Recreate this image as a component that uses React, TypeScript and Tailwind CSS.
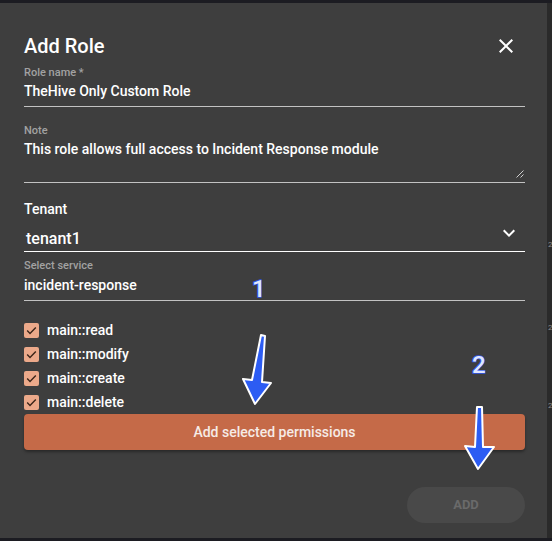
import React from 'react'

const permissions = ['main::read', 'main::modify', 'main::create', 'main::delete']

function CheckBox() {
  return (
    <span className="flex h-[15px] w-[15px] items-center justify-center rounded-[2px] bg-[#eca98a]">
      <svg width="11" height="9" viewBox="0 0 11 9" fill="none">
        <path d="M1.2 4.6 4 7.4 9.8 1.4" stroke="#3b2418" strokeWidth="1.4" />
      </svg>
    </span>
  )
}

function Annotations() {
  return (
    <svg className="pointer-events-none absolute inset-0" width="552" height="541" viewBox="0 0 552 541">
      <g stroke="#ffffff" strokeWidth="2" strokeLinejoin="round" fill="#2c5cf3">
        <polygon points="261,335 265,336 262,382 271,383 255,404 243,379 252,380" />
        <polygon points="477,407 482,407 483,447 494,447 478,469 465,446 475,447" />
      </g>
      <g
        fontFamily="Roboto, sans-serif"
        fontWeight="500"
        fontSize="24"
        fill="#dfe6ff"
        stroke="#3056e8"
        strokeWidth="1.6"
        style={{ paintOrder: 'stroke' }}
      >
        <text x="252" y="297">1</text>
        <text x="472" y="373">2</text>
      </g>
    </svg>
  )
}

export default function App() {
  return (
    <div className="relative h-[541px] w-[552px] overflow-hidden bg-[#2a2a2a] font-['Roboto',sans-serif] text-white">
      <div className="h-[3px] bg-[#1c1c22]" />
      <div className="flex">
        <div className="flex h-[535px] w-[547px] flex-col bg-[#3e3e3e] pl-6 pr-[22px]">
          <div className="mt-[31px] flex h-6 items-center justify-between">
            <h2 className="text-[20px] leading-6 font-medium">Add Role</h2>
            <svg className="mr-[7px]" width="24" height="24" viewBox="0 0 24 24" fill="#ffffff">
              <path d="M19 6.41 17.59 5 12 10.59 6.41 5 5 6.41 10.59 12 5 17.59 6.41 19 12 13.41 17.59 19 19 17.59 13.41 12z" />
            </svg>
          </div>

          <div className="mt-2">
            <div className="text-[11px] leading-[13px] font-medium text-[#a2a2a2]">Role name *</div>
            <div className="mt-[2px] border-b border-[#c2c2c2] pb-[5px] text-[14px] leading-5 font-medium">
              TheHive Only Custom Role
            </div>
          </div>

          <div className="mt-[17px]">
            <div className="text-[11px] leading-[13px] font-medium text-[#a2a2a2]">Note</div>
            <div className="relative mt-[2px] h-[44px] border-b border-[#c2c2c2] text-[14px] leading-5 font-medium">
              This role allows full access to Incident Response module
              <svg className="absolute right-[1px] bottom-[4px]" width="8" height="8" viewBox="0 0 8 8" stroke="#cfcfcf" strokeWidth="1">
                <path d="M7.5 0.5 0.5 7.5M7.5 4.5 4.5 7.5" />
              </svg>
            </div>
          </div>

          <div className="mt-4 text-[14px] leading-5 font-medium">Tenant</div>
          <div className="mt-2 flex h-[25px] items-start justify-between border-b border-white pl-[2px]">
            <span className="text-[16px] leading-6 font-medium">tenant1</span>
            <svg className="mr-[4px] -translate-y-[6px]" width="24" height="24" viewBox="0 0 24 24" fill="#ffffff">
              <path d="M16.59 8.59 12 13.17 7.41 8.59 6 10l6 6 6-6z" />
            </svg>
          </div>

          <div className="mt-[7px]">
            <div className="text-[11px] leading-[13px] font-medium text-[#a2a2a2]">Select service</div>
            <div className="mt-[3px] border-b border-[#c2c2c2] pb-[5px] text-[14px] leading-5 font-medium">
              incident-response
            </div>
          </div>

          <ul className="mt-[17px]">
            {permissions.map((p) => (
              <li key={p} className="flex h-6 items-center gap-2 text-[14px] font-medium">
                <CheckBox />
                <span>{p}</span>
              </li>
            ))}
          </ul>

          <button
            type="button"
            className="h-9 w-full rounded bg-[#c56a48] text-[14px] font-medium text-[#f6ebe6] shadow-[0_2px_3px_rgba(0,0,0,0.35)]"
          >
            Add selected permissions
          </button>

          <button
            type="button"
            disabled
            className="mt-[37px] h-9 w-[118px] self-end rounded-full bg-[#494949] text-[13px] font-bold text-[#6a6a6a]"
          >
            ADD
          </button>
        </div>
        <div className="relative flex-1">
          <span className="absolute top-[236px] left-[1px] text-[8px] text-[#8a8a8a]">2</span>
          <span className="absolute top-[319px] left-[1px] text-[8px] text-[#8a8a8a]">2</span>
          <span className="absolute top-[397px] left-[1px] text-[8px] text-[#8a8a8a]">2</span>
        </div>
      </div>
      <div className="h-[3px] bg-[#1c1c22]" />
      <Annotations />
    </div>
  )
}
